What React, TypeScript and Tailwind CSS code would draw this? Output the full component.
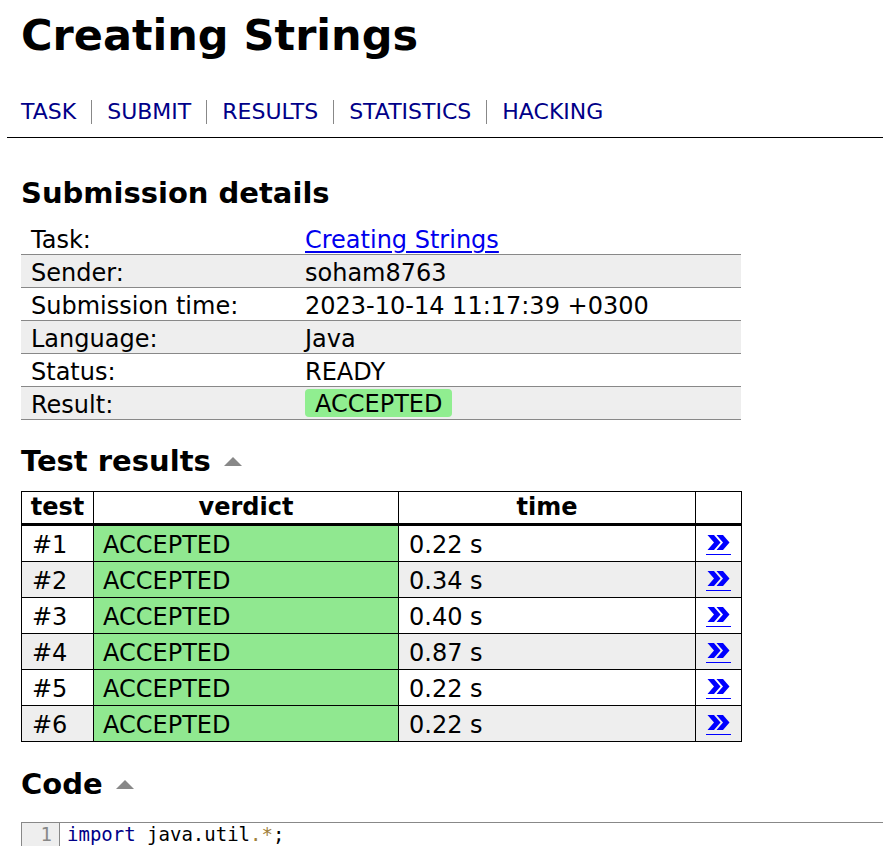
const tests = [
  { id: 1, time: '0.22 s' },
  { id: 2, time: '0.34 s' },
  { id: 3, time: '0.40 s' },
  { id: 4, time: '0.87 s' },
  { id: 5, time: '0.22 s' },
  { id: 6, time: '0.22 s' },
];

const navItems = ['TASK', 'SUBMIT', 'RESULTS', 'STATISTICS', 'HACKING'];

function Triangle() {
  return (
    <svg width="18" height="9" viewBox="0 0 18 9" className="inline-block">
      <polygon points="9,0 18,9 0,9" fill="#888888" />
    </svg>
  );
}

function Chevrons() {
  return (
    <a href="#" className="flex flex-col items-center">
      <svg width="25" height="17" viewBox="0 0 25 17">
        <polygon points="1.5,1 8,1 14.5,8.5 8,16 1.5,16 8,8.5" fill="#0000ff" />
        <polygon points="10.5,1 17,1 23.5,8.5 17,16 10.5,16 17,8.5" fill="#0000ff" />
      </svg>
      <span className="mt-[3px] block h-px w-[25px] bg-[#0000ff]" />
    </a>
  );
}

function DetailRow({ label, gray, children }: { label: string; gray?: boolean; children: React.ReactNode }) {
  return (
    <div className={`flex h-[33px] border-b border-[#888888] ${gray ? 'bg-[#eeeeee]' : 'bg-white'}`}>
      <div className="w-[274px] pl-[10px] pt-[4px] leading-[28px]">{label}</div>
      <div className="flex-1 pl-[10px] pt-[4px] leading-[28px]">{children}</div>
    </div>
  );
}

export default function App() {
  return (
    <div className="min-h-screen overflow-hidden bg-white pl-[7px] font-['DejaVu_Sans',Verdana,sans-serif] text-[24px] text-black">
      {/* Header */}
      <div className="pl-[14px]">
        <h1 className="mt-[13px] text-[43px] font-bold leading-[44px]">Creating Strings</h1>
        <nav className="mt-[43px] flex text-[22px] leading-[24px]">
          {navItems.map((item, i) => (
            <a
              key={item}
              href="#"
              className={`text-[#000088] ${i === 0 ? 'pr-[15px]' : 'border-l border-[#888888] px-[15px]'}`}
            >
              {item}
            </a>
          ))}
        </nav>
      </div>
      <div className="mt-[13px] h-px bg-black" />

      <div className="pl-[14px]">
        {/* Submission details */}
        <h2 className="mt-[41px] text-[29px] font-bold leading-[29px]">Submission details</h2>
        <div className="mt-[14px] w-[720px]">
          <DetailRow label="Task:">
            <a href="#" className="text-[#0000ee] underline underline-offset-[3px]">
              Creating Strings
            </a>
          </DetailRow>
          <DetailRow label="Sender:" gray>
            soham8763
          </DetailRow>
          <DetailRow label="Submission time:">2023-10-14 11:17:39 +0300</DetailRow>
          <DetailRow label="Language:" gray>
            Java
          </DetailRow>
          <DetailRow label="Status:">READY</DetailRow>
          <div className="flex h-[33px] border-b border-[#888888] bg-[#eeeeee]">
            <div className="w-[274px] pl-[10px] pt-[4px] leading-[28px]">Result:</div>
            <div className="flex flex-1 items-start pl-[10px] pt-[2px]">
              <span className="block h-[28px] rounded-[4px] bg-[#90ee90] px-[10px] pt-[1px] leading-[28px]">ACCEPTED</span>
            </div>
          </div>
        </div>

        {/* Test results */}
        <h2 className="mt-[27px] flex items-center gap-[13px] text-[29px] font-bold leading-[29px]">
          Test results <Triangle />
        </h2>
        <div className="mt-[15px] w-[721px] border border-black">
          <div className="grid h-[34px] grid-cols-[71px_305px_297px_46px] border-b-[3px] border-black font-bold leading-[31px]">
            <div className="text-center">test</div>
            <div className="border-l border-black text-center">verdict</div>
            <div className="border-l border-black text-center">time</div>
            <div className="border-l border-black" />
          </div>
          {tests.map((t, i) => (
            <div
              key={t.id}
              className={`grid grid-cols-[71px_305px_297px_46px] ${i < tests.length - 1 ? 'h-[36px] border-b border-black' : 'h-[35px]'} ${i % 2 === 1 ? 'bg-[#eeeeee]' : 'bg-white'}`}
            >
              <div className="pl-[10px] pt-[4px] leading-[31px]">#{t.id}</div>
              <div className="border-l border-black bg-[#90e890] pl-[9px] pt-[4px] leading-[31px]">ACCEPTED</div>
              <div className="border-l border-black pl-[10px] pt-[4px] leading-[31px]">{t.time}</div>
              <div className="flex items-center justify-center border-l border-black pt-[1px]">
                <Chevrons />
              </div>
            </div>
          ))}
        </div>

        {/* Code */}
        <h2 className="mt-[28px] flex items-center gap-[13px] text-[29px] font-bold leading-[29px]">
          Code <Triangle />
        </h2>
        <div className="mt-[23px] flex border-l border-t border-[#888888] font-['DejaVu_Sans_Mono',monospace] text-[19px]">
          <div className="w-[38px] border-r border-[#888888] bg-[#eeeeee] pr-[7px] text-right leading-[23px] text-[#888888]">
            1
          </div>
          <div className="pl-[7px] leading-[23px]">
            <span className="text-[#000088]">import</span> java.util<span className="text-[#a0803a]">.*</span>;
          </div>
        </div>
      </div>
    </div>
  );
}
